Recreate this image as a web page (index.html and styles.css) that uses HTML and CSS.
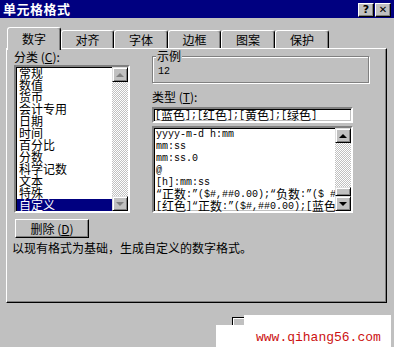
FILE: index.html
```html
<!DOCTYPE html>
<html lang="zh">
<head>
<meta charset="utf-8">
<title>单元格格式</title>
<link rel="stylesheet" href="styles.css">
</head>
<body>
<div class="dlg">
  <div class="titlebar">
    <span class="title">单元格格式</span>
    <div class="tbtns"><span class="tbtn">?</span><span class="tbtn close">✕</span></div>
  </div>
  <div class="tabs">
    <div class="tab sel w54">数字</div>
    <div class="tab w53">对齐</div>
    <div class="tab w54">字体</div>
    <div class="tab w53">边框</div>
    <div class="tab w54">图案</div>
    <div class="tab w54">保护</div>
  </div>
  <div class="panel">
    <div class="cols">
      <div class="left">
        <div class="lbl">分类 (<u>C</u>):</div>
        <div class="listbox cat">
          <ul class="items">
            <li>常规</li>
            <li>数值</li>
            <li>货币</li>
            <li>会计专用</li>
            <li>日期</li>
            <li>时间</li>
            <li>百分比</li>
            <li>分数</li>
            <li>科学记数</li>
            <li>文本</li>
            <li>特殊</li>
            <li class="hl">自定义</li>
          </ul>
          <div class="sbar">
            <div class="sbtn"><span class="arr up dis"></span></div>
            <div class="track"></div>
            <div class="sbtn"><span class="arr down dis"></span></div>
          </div>
        </div>
        <div class="btn del">删除 (<u>D</u>)</div>
      </div>
      <div class="right">
        <div class="group">
          <span class="glabel">示例</span>
          <div class="sample">12</div>
        </div>
        <div class="lbl type">类型 (<u>T</u>):</div>
        <div class="input mono">[<span class="cj">蓝色</span>];[<span class="cj">红色</span>];[<span class="cj">黄色</span>];[<span class="cj">绿色</span>]</div>
        <div class="listbox fmt">
          <ul class="items mono">
            <li>yyyy-m-d h:mm</li>
            <li>mm:ss</li>
            <li>mm:ss.0</li>
            <li>@</li>
            <li>[h]:mm:ss</li>
            <li>“<span class="cj">正数</span>:”($#,##0.00);“<span class="cj">负数</span>:”($ #,##0.00)</li>
            <li>[<span class="cj">红色</span>]“<span class="cj">正数</span>:”($#,##0.00);[<span class="cj">蓝色</span>]</li>
          </ul>
          <div class="sbar">
            <div class="sbtn"><span class="arr up"></span></div>
            <div class="track"><div class="thumb"></div></div>
            <div class="sbtn"><span class="arr down"></span></div>
          </div>
        </div>
      </div>
    </div>
    <div class="desc">以现有格式为基础，生成自定义的数字格式。</div>
  </div>
  <div class="footer">
    <div class="btn ok"></div>
  </div>
  <div class="wm">
    <div class="wm-a"></div>
    <div class="wm-b"><span>www.qihang56.com</span></div>
  </div>
</div>
</body>
</html>
```
FILE: styles.css
```css
* { box-sizing: border-box; }
html, body { margin: 0; padding: 0; }
body {
  width: 394px;
  height: 347px;
  background: #c0c0c0;
  font-family: "Noto Sans CJK SC", "Liberation Sans", sans-serif;
  font-size: 12px;
  line-height: 12px;
  color: #000;
  overflow: hidden;
}
.dlg { position: relative; width: 394px; height: 347px; }

.titlebar {
  height: 18px;
  background: #000080;
  display: flex;
  align-items: center;
  justify-content: space-between;
  padding: 0 3px 0 3px;
}
.title {
  color: #fff;
  font-weight: bold;
  font-size: 13px;
  line-height: 14px;
  letter-spacing: 0.5px;
}
.tbtns { display: flex; gap: 1px; padding-top: 1px; }
.tbtn {
  width: 16px;
  height: 14px;
  background: #c0c0c0;
  border: 1px solid;
  border-color: #fff #000 #000 #fff;
  box-shadow: inset -1px -1px #808080;
  font-family: "DejaVu Sans", sans-serif;
  font-weight: bold;
  font-size: 11px;
  line-height: 12px;
  text-align: center;
  color: #000;
}
.tbtn.close { font-size: 10px; }

.tabs {
  height: 30px;
  display: flex;
  align-items: flex-end;
  padding-left: 7px;
}
.tab {
  height: 18px;
  border: 1px solid;
  border-bottom: none;
  border-color: #fff #000 transparent #fff;
  border-radius: 3px 3px 0 0;
  box-shadow: inset -1px 0 #808080;
  text-align: center;
  line-height: 17px;
  font-size: 12px;
  background: #c0c0c0;
}
.tab.sel {
  height: 23px;
  margin-bottom: -2px;
  position: relative;
  z-index: 2;
  line-height: 21px;
  padding-bottom: 2px;
}
.w54 { width: 54px; }
.w53 { width: 53px; }

.panel {
  margin-left: 6px;
  width: 381px;
  height: 255px;
  border: 1px solid;
  border-color: #fff #000 #000 #fff;
  box-shadow: inset -1px -1px #808080;
  position: relative;
  z-index: 1;
}
.cols { display: flex; }
.left { margin-left: 7px; width: 116px; }
.right { margin-left: 22px; width: 217px; }

.lbl { margin-top: 2px; height: 12px; white-space: nowrap; }
.lbl u { text-decoration: underline; }

.listbox {
  background: #fff;
  border: 2px solid;
  border-color: #808080 #fff #fff #808080;
  box-shadow: inset 1px 1px #000, inset -1px -1px #c0c0c0;
  display: flex;
}
.listbox.cat { margin-top: 2px; height: 148px; }
.items {
  list-style: none;
  margin: 0;
  padding: 0 0 0 1px;
  flex: 1;
  min-width: 0;
  overflow-x: clip;
  overflow-y: visible;
}
.items li { height: 12px; line-height: 12px; white-space: nowrap; padding-left: 2px; }
.cat .items li.hl { background: #000080; color: #fff; }
.sbar { width: 16px; flex: none; display: flex; flex-direction: column; }
.track {
  flex: 1;
  background: repeating-conic-gradient(#c0c0c0 0 25%, #fff 0 50%) 0 0 / 2px 2px;
  display: flex;
  flex-direction: column;
  justify-content: flex-end;
}
.sbtn, .thumb {
  height: 15px;
  background: #c0c0c0;
  border: 1px solid;
  border-color: #dfdfdf #000 #000 #dfdfdf;
  box-shadow: inset 1px 1px #fff, inset -1px -1px #808080;
  display: flex;
  align-items: center;
  justify-content: center;
}
.thumb { height: 9px; }
.arr { width: 0; height: 0; border-left: 4px solid transparent; border-right: 4px solid transparent; }
.arr.up { border-bottom: 4px solid #000; }
.arr.down { border-top: 4px solid #000; }
.arr.up.dis { border-bottom-color: #808080; }
.arr.down.dis { border-top-color: #808080; }

.btn {
  height: 19px;
  background: #c0c0c0;
  border: 1px solid;
  border-color: #fff #000 #000 #fff;
  box-shadow: inset -1px -1px #808080;
  text-align: center;
  line-height: 17px;
}
.btn.del { margin-top: 6px; margin-left: 1px; width: 74px; }

.group {
  position: relative;
  margin-top: 7px;
  height: 27px;
  border: 1px solid #808080;
  box-shadow: inset 1px 1px #fff, 1px 1px #fff;
}
.glabel {
  position: absolute;
  left: 3px;
  top: -7px;
  background: #c0c0c0;
  padding: 0 1px;
  line-height: 12px;
}
.sample {
  font-family: "Liberation Mono", monospace;
  font-size: 10px;
  padding: 9px 0 0 5px;
  line-height: 12px;
}
.lbl.type { margin-top: 8px; }

.mono { font-family: "Liberation Mono", monospace; font-size: 10px; }
.mono li { line-height: 12px; }
.cj { font-family: "Noto Sans CJK SC", sans-serif; font-size: 12px; line-height: 10px; vertical-align: -2px; }

.input {
  margin-top: 4px;
  width: 201px;
  height: 16px;
  background: #fff;
  border: 2px solid;
  border-color: #808080 #fff #fff #808080;
  box-shadow: inset 1px 1px #000, inset -1px -1px #c0c0c0;
  padding: 1px 0 0 1px;
  line-height: 11px;
  white-space: nowrap;
}
.listbox.fmt {
  margin-top: 3px;
  width: 201px;
  height: 87px;
}
.fmt .items { padding-top: 1px; }
.fmt .items li { padding-left: 1px; }

.desc { margin-top: 4px; margin-left: 5px; height: 12px; white-space: nowrap; }

.footer { padding: 14px 0 0 232px; }
.btn.ok {
  width: 75px;
  height: 23px;
  border: 1px solid #000;
  box-shadow: inset 1px 1px #fff, inset -2px -2px #808080;
}

.wm { position: absolute; left: 216px; top: 315px; width: 175px; height: 32px; }
.wm-a { position: absolute; left: 0; top: 10px; width: 40px; height: 22px; background: #fff; }
.wm-b {
  position: absolute;
  left: 28px;
  top: 0;
  width: 147px;
  height: 32px;
  background: #fff;
  padding: 15px 0 0 12px;
}
.wm-b span {
  font-family: "Liberation Mono", monospace;
  font-size: 13px;
  line-height: 14px;
  color: #cc1111;
  white-space: nowrap;
}
```
